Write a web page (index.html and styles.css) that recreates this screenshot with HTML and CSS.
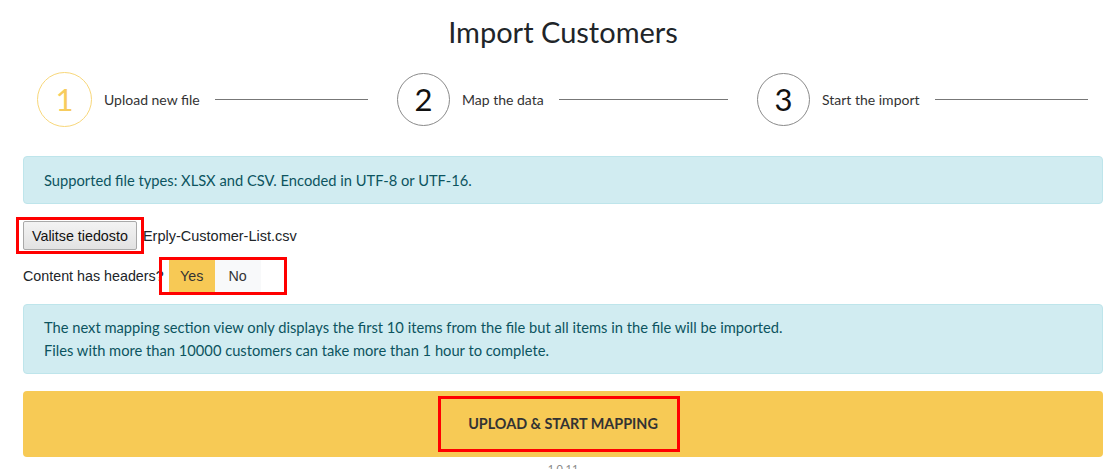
FILE: index.html
```html
<!DOCTYPE html>
<html lang="en">
<head>
    <meta charset="UTF-8">
    <meta name="viewport" content="width=device-width, initial-scale=1.0">
    <title>Import Customers</title>
    <link rel="stylesheet" href="styles.css">
</head>
<body>
    <div class="import-container">
        <h1 class="title">Import Customers</h1>

        <div class="steps">
            <div class="step active">
                <div class="step-circle">1</div>
                <div class="step-label">Upload new file</div>
                <div class="step-line"></div>
            </div>
            <div class="step">
                <div class="step-circle">2</div>
                <div class="step-label">Map the data</div>
                <div class="step-line"></div>
            </div>
            <div class="step">
                <div class="step-circle">3</div>
                <div class="step-label">Start the import</div>
                <div class="step-line"></div>
            </div>
        </div>

        <div class="alert">Supported file types: XLSX and CSV. Encoded in UTF-8 or UTF-16.</div>

        <div class="file-row">
            <span class="marked mark-file"><button class="file-button">Valitse tiedosto</button></span>
            <span class="file-name">Erply-Customer-List.csv</span>
        </div>

        <div class="headers-row">
            <span class="headers-label">Content has headers?</span>
            <span class="marked mark-toggle">
                <span class="toggle">
                    <button class="toggle-option selected">Yes</button>
                    <button class="toggle-option">No</button>
                </span>
            </span>
        </div>

        <div class="alert alert-tall">
            The next mapping section view only displays the first 10 items from the file but all items in the file will be imported.<br>
            Files with more than 10000 customers can take more than 1 hour to complete.
        </div>

        <button class="upload-button"><span class="marked mark-upload">UPLOAD &amp; START MAPPING</span></button>

        <div class="version">1.0.11</div>
    </div>
</body>
</html>
```

FILE: styles.css
```css
body {
    margin: 0;
    font-family: Lato, "Noto Sans", sans-serif;
    color: #212529;
    background: #ffffff;
}

.import-container {
    width: 1080px;
    padding-left: 23px;
}

.title {
    margin: 0;
    padding-top: 14px;
    font-size: 29px;
    font-weight: 400;
    line-height: 36px;
    text-align: center;
}

.steps {
    display: grid;
    grid-template-columns: repeat(3, 1fr);
    margin-top: 20px;
}

.step {
    display: flex;
    align-items: center;
    padding: 0 15px 0 14px;
    height: 58px;
}

.step-circle {
    box-sizing: border-box;
    width: 53px;
    height: 53px;
    flex: none;
    border: 1px solid #8a8a8a;
    border-radius: 50%;
    display: flex;
    justify-content: center;
    align-items: center;
    font-size: 31px;
    color: #111;
}

.step.active .step-circle {
    width: 55px;
    height: 55px;
    border-color: #f8d77a;
    color: #f7cc5e;
}

.step-label {
    margin-left: 12px;
    font-size: 14px;
    color: #333;
    white-space: nowrap;
}

.step-line {
    flex: 1;
    height: 1px;
    margin-left: 15px;
    background: #777;
}

.alert {
    margin-top: 28px;
    padding: 11px 20px;
    background-color: #d1ecf1;
    border: 1px solid #bee5eb;
    border-radius: 4px;
    color: #0c5460;
    font-size: 14.7px;
    line-height: 24px;
}

.alert-tall {
    margin-top: 11px;
    line-height: 23px;
}

.file-row {
    display: flex;
    align-items: center;
    margin-top: 17px;
    font-family: "Liberation Sans", Arial, sans-serif;
    font-size: 14.5px;
}

.marked {
    position: relative;
    display: inline-flex;
}

.marked::after {
    content: "";
    position: absolute;
    border: 3px solid #ff0000;
    pointer-events: none;
}

.mark-file::after {
    top: -4px;
    bottom: -4px;
    left: -7px;
    right: -7px;
}

.file-button {
    height: 29px;
    padding: 0 8px;
    font-family: "Liberation Sans", Arial, sans-serif;
    font-size: 14.3px;
    color: #111;
    background: linear-gradient(#f3f3f3, #e2e2e2);
    border: 1px solid #a9a9a9;
    border-radius: 2px;
}

.file-name {
    margin-left: 6px;
}

.headers-row {
    display: flex;
    align-items: center;
    margin-top: 9px;
    font-family: "Liberation Sans", Arial, sans-serif;
    font-size: 14.3px;
}

.headers-label {
    margin-right: 5px;
}

.mark-toggle::after {
    top: -2px;
    bottom: -2px;
    left: -10px;
    right: -26px;
}

.toggle {
    display: flex;
}

.toggle-option {
    width: 46px;
    height: 34px;
    padding: 0;
    border: none;
    font-family: "Liberation Sans", Arial, sans-serif;
    font-size: 14.3px;
    color: #333;
    background: #f8f9fa;
}

.toggle-option.selected {
    background: #f7c955;
}

.upload-button {
    display: flex;
    justify-content: center;
    align-items: center;
    width: 100%;
    height: 66px;
    margin-top: 17px;
    border: none;
    border-radius: 4px;
    background: #f7ca55;
    font-family: Lato, "Noto Sans", sans-serif;
    font-size: 14.4px;
    font-weight: 700;
    color: #333;
    line-height: 20px;
}

.mark-upload::after {
    top: -18px;
    bottom: -18px;
    left: -30px;
    right: -22px;
}

.version {
    margin-top: 5px;
    text-align: center;
    font-size: 11px;
    color: #888;
}
```
